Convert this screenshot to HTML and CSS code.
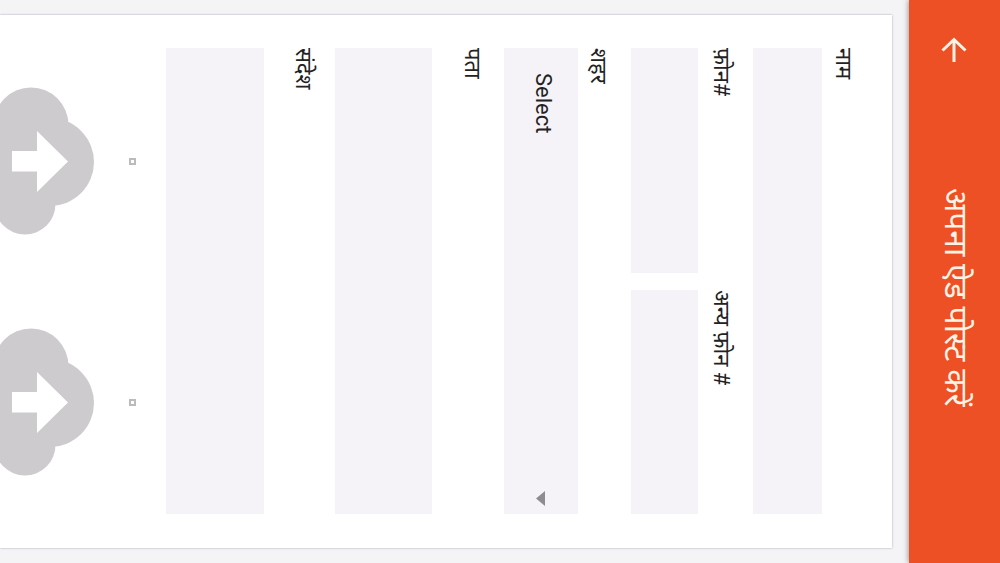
FILE: index.html
```html
<!DOCTYPE html>
<html lang="hi">
<head>
<meta charset="utf-8">
<title>अपना ऐड पोस्ट करें</title>
<link rel="stylesheet" href="styles.css">
</head>
<body>
<div class="screen">
  <header class="appbar">
    <svg class="back" viewBox="0 0 26 26"><path d="M13.5 1.5 2.5 13l11 11.5M2.5 13H25" fill="none" stroke="currentColor" stroke-width="3"/></svg>
    <h1 class="title">अपना ऐड पोस्ट करें</h1>
  </header>
  <main class="card">
    <div class="group name">
      <label class="label">नाम</label>
      <div class="field"></div>
    </div>
    <div class="row">
      <div class="group phone">
        <label class="label">फ़ोन#</label>
        <div class="field"></div>
      </div>
      <div class="group phone">
        <label class="label">अन्य फ़ोन #</label>
        <div class="field"></div>
      </div>
    </div>
    <div class="group city">
      <label class="label">शहर</label>
      <div class="field select"><span>Select</span><svg class="caret" viewBox="0 0 15 9"><path d="M0 0h15L7.5 9z" fill="currentColor"/></svg></div>
    </div>
    <div class="group address">
      <label class="label">पता</label>
      <div class="field"></div>
    </div>
    <div class="group message">
      <label class="label">संदेश</label>
      <div class="field"></div>
    </div>
    <div class="uploads">
      <div class="upload">
        <span class="thumb"></span>
        <svg class="cloud" viewBox="0 0 148 94"><g fill="#cdcbce"><circle cx="75" cy="44" r="44"/><circle cx="38" cy="63" r="37.5"/><circle cx="117" cy="69" r="30.5"/><path d="M38 50h79v50H38z"/></g><path d="M64 82V57H44l30.5-31L105 57H84.5v25z" fill="#fff"/></svg>
      </div>
      <div class="upload">
        <span class="thumb"></span>
        <svg class="cloud" viewBox="0 0 148 94"><g fill="#cdcbce"><circle cx="75" cy="44" r="44"/><circle cx="38" cy="63" r="37.5"/><circle cx="117" cy="69" r="30.5"/><path d="M38 50h79v50H38z"/></g><path d="M64 82V57H44l30.5-31L105 57H84.5v25z" fill="#fff"/></svg>
      </div>
    </div>
  </main>
</div>
</body>
</html>
```
FILE: styles.css
```css
* { box-sizing: border-box; }
html, body { margin: 0; width: 1000px; height: 563px; overflow: hidden; }

/* Portrait phone screen turned a quarter clockwise */
.screen {
  width: 563px;
  height: 1000px;
  margin-bottom: -437px;
  overflow: hidden;
  transform: translateX(1000px) rotate(90deg);
  transform-origin: 0 0;
  background: #f4f3f6;
  color: #222;
  font-family: Roboto, "Noto Sans", "Noto Sans Devanagari", sans-serif;
}
.appbar {
  height: 91px;
  display: flex;
  align-items: center;
  padding-left: 37px;
  background: #ec5024;
  color: #fff3e6;
  box-shadow: 0 1px 5px rgba(0, 0, 0, .35);
}
.back { width: 26px; height: 26px; margin-top: 1px; }
.title { margin: 0 0 4px 125px; font-size: 31.8px; font-weight: 400; line-height: 40px; white-space: nowrap; }
.card {
  margin: 17px 15px 0;
  height: 892px;
  padding: 0 34px 0 33px;
  background: #fff;
  box-shadow: 0 0 2px rgba(60, 50, 70, .4);
}
.group { display: flex; flex-direction: column; }
.label { display: flex; align-items: flex-end; font-size: 22px; line-height: 30px; white-space: nowrap; }
.field { background: #f5f3f7; }
.name .label { height: 70px; padding-bottom: 6px; }
.name .field { height: 69px; }
.row { display: grid; grid-template-columns: 225px 224px; gap: 17px; }
.phone .label { height: 55px; padding-bottom: 8px; }
.phone .field { height: 67px; }
.city .label { height: 53px; padding-bottom: 5px; }
.city .field { height: 74px; }
.address .label { height: 72px; padding-bottom: 25px; }
.address .field { height: 97px; }
.message .label { height: 71px; padding-bottom: 24px; }
.message .field { height: 98px; }
.select { display: flex; align-items: center; justify-content: space-between; padding: 0 8px 0 25px; font-size: 22px; }
.select span { margin-bottom: 5px; }
.caret { width: 15px; height: 9px; color: #8e8c90; }
.uploads { display: flex; gap: 93px; margin: 30px 0 0 39px; }
.upload { flex: none; display: flex; flex-direction: column; align-items: center; gap: 35px; width: 148px; }
.thumb { width: 7px; height: 7px; border: 2px solid #bcbabd; }
.cloud { width: 148px; height: 94px; }
```
